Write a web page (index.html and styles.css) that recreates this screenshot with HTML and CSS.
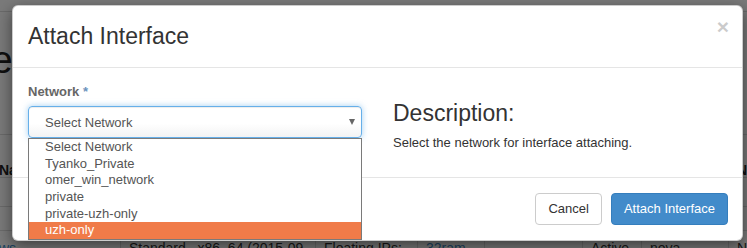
FILE: index.html
```html
<!DOCTYPE html>
<html>
<head>
<meta charset="utf-8">
<title>Attach Interface</title>
<link rel="stylesheet" href="styles.css">
</head>
<body>
<div class="page">
  <div class="navbar"></div>
  <h1 class="page-title">Instance</h1>
  <table class="grid">
    <thead>
      <tr><th class="c1">Name</th><th class="c2">Image</th><th class="c3">IP</th><th class="c4">Size</th><th class="c5">Key</th><th class="c6">State</th><th class="c7">Zone</th><th class="c8">Ns</th></tr>
    </thead>
    <tbody>
      <tr class="r1"><td class="c1"></td><td></td><td></td><td></td><td></td><td></td><td></td><td></td></tr>
      <tr class="r2"><td class="c1"></td><td></td><td></td><td></td><td></td><td></td><td></td><td></td></tr>
      <tr class="r3"><td class="c1 link">ws</td><td>Standard&nbsp;&nbsp; x86_64 (2015-09</td><td>Floating IPs:</td><td class="link">32ram</td><td></td><td>Active</td><td>nova</td><td>No</td></tr>
    </tbody>
  </table>
</div>
<div class="backdrop"></div>
<div class="modal">
  <div class="modal-header">
    <h3 class="modal-title">Attach Interface</h3>
    <span class="close">×</span>
  </div>
  <div class="modal-body">
    <div class="col left">
      <label class="field-label">Network <span class="req">*</span></label>
      <div class="select-wrap">
        <div class="select"><span>Select Network</span><span class="caret"></span></div>
        <ul class="options">
          <li>Select Network</li>
          <li>Tyanko_Private</li>
          <li>omer_win_network</li>
          <li>private</li>
          <li>private-uzh-only</li>
          <li class="active">uzh-only</li>
        </ul>
      </div>
    </div>
    <div class="col right">
      <h3 class="desc-title">Description:</h3>
      <p class="desc">Select the network for interface attaching.</p>
    </div>
  </div>
  <div class="modal-footer">
    <button class="btn btn-default">Cancel</button>
    <button class="btn btn-primary">Attach Interface</button>
  </div>
</div>
</body>
</html>
```
FILE: styles.css
```css
html, body {
  margin: 0;
  padding: 0;
}
body {
  width: 747px;
  height: 248px;
  overflow: hidden;
  position: relative;
  background: #fff;
  font-family: "Liberation Sans", Arial, sans-serif;
  color: #333;
}
.page {
  width: 747px;
}
.navbar {
  height: 11px;
  border-bottom: 1px solid #ddd;
}
.page-title {
  margin: 27px 0 0 -131px;
  font-size: 38px;
  line-height: 42px;
  font-weight: normal;
  color: #222;
  white-space: nowrap;
}
.grid {
  margin-top: 53px;
  border-collapse: collapse;
  table-layout: fixed;
  width: 780px;
  font-size: 14px;
}
.grid th, .grid td {
  border-top: 1px solid #ddd;
  border-left: 1px solid #ddd;
  padding: 0 8px;
  text-align: left;
  white-space: nowrap;
  overflow: hidden;
}
.grid th {
  height: 42px;
  vertical-align: bottom;
  padding-bottom: 0;
  line-height: 14px;
  font-weight: bold;
  border-bottom: 1px solid #ddd;
  color: #222;
}
.grid .c1 { width: 112px; padding-left: 0; border-left: none; }
.grid .c1:first-child { text-indent: -1px; }
.grid .c2 { width: 178px; }
.grid .c3 { width: 85px; }
.grid .c4 { width: 50px; }
.grid .c5 { width: 81px; }
.grid .c6 { width: 42px; }
.grid .c7 { width: 70px; }
.grid .c8 { width: 60px; }
.grid .r1 td { height: 28px; }
.grid .r2 td { height: 23px; }
.grid .r3 td { height: 30px; vertical-align: top; padding-top: 9px; line-height: 16px; }
.grid .link { color: #428bca; }

.backdrop {
  position: absolute;
  inset: 0;
  background: rgba(0, 0, 0, 0.52);
}

.modal {
  position: absolute;
  top: 5px;
  left: 12px;
  width: 731px;
  background: #fff;
  border: 1px solid rgba(0, 0, 0, 0.2);
  border-radius: 6px;
  box-shadow: 0 5px 15px rgba(0, 0, 0, 0.5);
  box-sizing: border-box;
  font-size: 13px;
}
.modal-header {
  display: flex;
  justify-content: space-between;
  align-items: flex-start;
  padding: 15px;
  border-bottom: 1px solid #e5e5e5;
}
.modal-title {
  margin: 0;
  font-size: 23px;
  line-height: 31px;
  font-weight: normal;
  color: #333;
}
.close {
  font-size: 21px;
  font-weight: bold;
  line-height: 1;
  color: #000;
  opacity: 0.2;
  margin-top: -5px;
  margin-right: -2px;
}
.modal-body {
  display: flex;
  gap: 31px;
  padding: 15px;
}
.col {
  flex: 1 1 0;
  min-width: 0;
}
.field-label {
  display: block;
  font-weight: bold;
  line-height: 18px;
  margin-bottom: 5px;
  color: #666;
}
.req {
  color: #6b93bd;
}
.select-wrap {
  position: relative;
}
.select {
  height: 32px;
  box-sizing: border-box;
  border: 1px solid #66afe9;
  border-radius: 4px;
  box-shadow: inset 0 1px 1px rgba(0, 0, 0, 0.075), 0 0 6px rgba(102, 175, 233, 0.6);
  background: linear-gradient(#fff 55%, #f3f3f3);
  display: flex;
  align-items: center;
  justify-content: space-between;
  padding: 0 6px 0 16px;
  color: #555;
}
.caret {
  width: 0;
  height: 0;
  border-left: 3.5px solid transparent;
  border-right: 3.5px solid transparent;
  border-top: 6px solid #666;
}
.options {
  position: absolute;
  top: 32px;
  left: 0;
  right: 0;
  margin: 0;
  padding: 0;
  list-style: none;
  background: #fff;
  border: 1px solid #7a7a7a;
  color: #555;
}
.options li {
  line-height: 16.7px;
  height: 16.7px;
  padding-left: 16px;
}
.options li.active {
  background: #f07b49;
  color: #fff;
}
.desc-title {
  margin: 18px 0 8px;
  font-size: 23px;
  line-height: 25px;
  font-weight: normal;
  color: #333;
}
.desc {
  margin: 0 0 10px;
  line-height: 18px;
}
.modal-footer {
  display: flex;
  justify-content: flex-end;
  gap: 9px;
  padding: 15px 14px 15px 15px;
  border-top: 1px solid #e5e5e5;
}
.btn {
  font-family: inherit;
  font-size: 13px;
  line-height: 18px;
  padding: 6px 12px;
  border-radius: 4px;
  border: 1px solid transparent;
}
.btn-default {
  background: #fff;
  color: #333;
  border-color: #ccc;
}
.btn-primary {
  background: #428bca;
  border-color: #357ebd;
  color: #fff;
}
```
